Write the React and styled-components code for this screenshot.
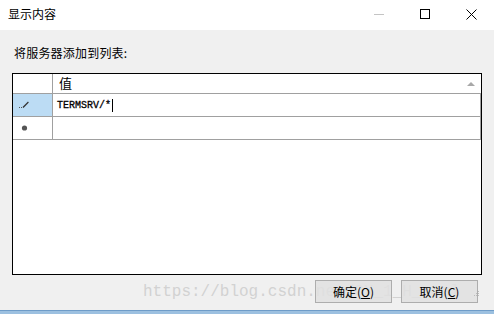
import styled, { createGlobalStyle } from "styled-components";

const Global = createGlobalStyle`
  html, body {
    margin: 0;
    padding: 0;
    background: #f0f0f0;
  }
  body {
    font-family: "Noto Sans CJK SC", "Liberation Sans", sans-serif;
    font-size: 12px;
    color: #000;
  }
`;

const Window = styled.div`
  position: relative;
  width: 494px;
  height: 314px;
  display: flex;
  flex-direction: column;
  background: #f0f0f0;
  overflow: hidden;
`;

const TitleBar = styled.div`
  height: 30px;
  flex: none;
  display: flex;
  align-items: center;
  background: #fff;
`;

const Title = styled.span`
  flex: 1;
  padding-left: 8px;
  font-size: 12px;
  line-height: 14px;
  margin-top: -2px;
`;

const Control = styled.div`
  width: 46px;
  height: 30px;
  display: flex;
  align-items: center;
  justify-content: center;
  margin-top: -2px;
`;

const Body = styled.div`
  flex: 1;
  display: flex;
  flex-direction: column;
  padding: 0 12px;
`;

const Label = styled.div`
  margin: 16px 0 0 2px;
  height: 14px;
  line-height: 14px;
  font-size: 12px;
  letter-spacing: 0.2px;
`;

const Grid = styled.div`
  margin-top: 13px;
  height: 200px;
  border: 1px solid #000;
  background: #fff;
  display: flex;
  flex-direction: column;
`;

const Row = styled.div`
  display: flex;
  height: ${(p) => p.$h}px;
  border-bottom: 1px solid #a0a0a0;
  border-right: ${(p) => (p.$header ? "none" : "1px solid #a0a0a0")};
`;

const RowHead = styled.div`
  width: 40px;
  flex: none;
  border-right: 1px solid #a0a0a0;
  background: ${(p) => (p.$active ? "#bcdcf4" : "#fff")};
  display: flex;
  align-items: center;
  padding-left: 6px;
  box-sizing: border-box;
`;

const Cell = styled.div`
  flex: 1;
  display: flex;
  align-items: center;
  padding-left: ${(p) => p.$pad}px;
  position: relative;
`;

const HeaderText = styled.span`
  font-size: 13px;
  line-height: 14px;
  margin-top: -2px;
`;

const SortArrow = styled.div`
  position: absolute;
  right: 6px;
  top: 8px;
  width: 0;
  height: 0;
  border-left: 4px solid transparent;
  border-right: 4px solid transparent;
  border-bottom: 4px solid #a8a8a8;
`;

const Value = styled.span`
  font-family: "Liberation Mono", "DejaVu Sans Mono", monospace;
  font-size: 10px;
  color: #000;
  -webkit-text-stroke: 0.3px #000;
`;

const Caret = styled.span`
  display: inline-block;
  width: 1px;
  height: 13px;
  background: #000;
  margin-left: 1px;
  vertical-align: -3px;
`;

const Footer = styled.div`
  position: relative;
  display: flex;
  justify-content: flex-end;
  gap: 9px;
  margin-top: 5px;
  padding-right: 4px;
`;

const Watermark = styled.div`
  position: absolute;
  left: 131px;
  top: 0;
  font-family: "Liberation Mono", monospace;
  font-size: 16px;
  line-height: 24px;
  color: #d2d2d2;
  white-space: nowrap;
  pointer-events: none;
`;

const Button = styled.button`
  position: relative;
  width: 77px;
  height: 23px;
  background: rgba(225, 225, 225, 0.85);
  border: 1px solid #adadad;
  font-family: "Noto Sans CJK SC", "Liberation Sans", sans-serif;
  font-size: 12px;
  color: #000;
  padding: 0;
  margin: 0;
  line-height: 20px;
  u {
    text-decoration: underline;
  }
`;

const Grip = styled.svg`
  position: absolute;
  right: 2px;
  bottom: 6px;
`;

const BottomEdge = styled.div`
  height: 3px;
  flex: none;
  background: #9cc0e0;
  border-top: 1px solid #6e9cc8;
`;

export default function App() {
  return (
    <>
      <Global />
      <Window>
        <TitleBar>
          <Title>显示内容</Title>
          <Control>
            <svg width="10" height="10" viewBox="0 0 10 10">
              <line x1="0" y1="5.5" x2="10" y2="5.5" stroke="#c4c4c4" strokeWidth="1" />
            </svg>
          </Control>
          <Control>
            <svg width="10" height="10" viewBox="0 0 10 10">
              <rect x="0.5" y="0.5" width="9" height="9" fill="none" stroke="#000" strokeWidth="1" />
            </svg>
          </Control>
          <Control>
            <svg width="11" height="11" viewBox="0 0 11 11">
              <path d="M0.5 0.5 L10.5 10.5 M10.5 0.5 L0.5 10.5" stroke="#000" strokeWidth="1" />
            </svg>
          </Control>
        </TitleBar>
        <Body>
          <Label>将服务器添加到列表:</Label>
          <Grid>
            <Row $h={19} $header>
              <RowHead />
              <Cell $pad={6}>
                <HeaderText>值</HeaderText>
                <SortArrow />
              </Cell>
            </Row>
            <Row $h={22}>
              <RowHead $active>
                <svg width="10" height="8" viewBox="0 0 10 8">
                  <path d="M9 0.5 L3.5 6 L4.5 7 L9.8 1.5 Z" fill="#333" />
                  <rect x="0" y="6" width="1" height="1" fill="#555" />
                  <rect x="2" y="6" width="1" height="1" fill="#555" />
                </svg>
              </RowHead>
              <Cell $pad={4}>
                <Value>TERMSRV/*</Value>
                <Caret />
              </Cell>
            </Row>
            <Row $h={22}>
              <RowHead>
                <svg width="10" height="8" viewBox="0 0 10 8">
                  <circle cx="5.5" cy="4" r="2.6" fill="#555" />
                </svg>
              </RowHead>
              <Cell $pad={4} />
            </Row>
          </Grid>
          <Footer>
            <Watermark>https://blog.csdn.net/OX_1_H_real</Watermark>
            <Button>确定(<u>O</u>)</Button>
            <Button>取消(<u>C</u>)</Button>
            <Grip width="6" height="6" viewBox="0 0 6 6">
              <rect x="4" y="0" width="1" height="1" fill="#bbb" />
              <rect x="2" y="2" width="1" height="1" fill="#bbb" />
              <rect x="4" y="2" width="1" height="1" fill="#bbb" />
              <rect x="0" y="4" width="1" height="1" fill="#bbb" />
              <rect x="2" y="4" width="1" height="1" fill="#bbb" />
              <rect x="4" y="4" width="1" height="1" fill="#bbb" />
            </Grip>
          </Footer>
        </Body>
        <BottomEdge />
      </Window>
    </>
  );
}
